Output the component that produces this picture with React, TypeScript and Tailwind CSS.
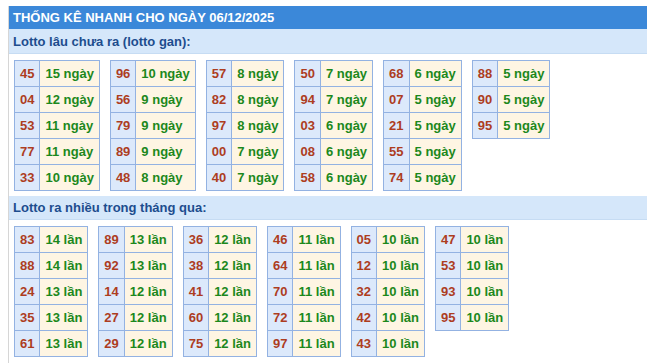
import React from "react";

const gan: [string, string][][] = [
  [["45", "15 ngày"], ["04", "12 ngày"], ["53", "11 ngày"], ["77", "11 ngày"], ["33", "10 ngày"]],
  [["96", "10 ngày"], ["56", "9 ngày"], ["79", "9 ngày"], ["89", "9 ngày"], ["48", "8 ngày"]],
  [["57", "8 ngày"], ["82", "8 ngày"], ["97", "8 ngày"], ["00", "7 ngày"], ["40", "7 ngày"]],
  [["50", "7 ngày"], ["94", "7 ngày"], ["03", "6 ngày"], ["08", "6 ngày"], ["58", "6 ngày"]],
  [["68", "6 ngày"], ["07", "5 ngày"], ["21", "5 ngày"], ["55", "5 ngày"], ["74", "5 ngày"]],
  [["88", "5 ngày"], ["90", "5 ngày"], ["95", "5 ngày"]],
];

const nhieu: [string, string][][] = [
  [["83", "14 lần"], ["88", "14 lần"], ["24", "13 lần"], ["35", "13 lần"], ["61", "13 lần"]],
  [["89", "13 lần"], ["92", "13 lần"], ["14", "12 lần"], ["27", "12 lần"], ["29", "12 lần"]],
  [["36", "12 lần"], ["38", "12 lần"], ["41", "12 lần"], ["60", "12 lần"], ["75", "12 lần"]],
  [["46", "11 lần"], ["64", "11 lần"], ["70", "11 lần"], ["72", "11 lần"], ["97", "11 lần"]],
  [["05", "10 lần"], ["12", "10 lần"], ["32", "10 lần"], ["42", "10 lần"], ["43", "10 lần"]],
  [["47", "10 lần"], ["53", "10 lần"], ["93", "10 lần"], ["95", "10 lần"]],
];

function Tables({ data }: { data: [string, string][][] }) {
  return (
    <div className="flex items-start gap-[10px] pl-[5px] pt-[6px]">
      {data.map((col, i) => (
        <table key={i} className="border-collapse">
          <tbody>
            {col.map(([n, t], j) => (
              <tr key={j}>
                <td className="border border-[#93b2e2] bg-[#dce9fb] h-[26px] px-[5px] py-0 text-center text-[13px] font-bold leading-[15px] text-[#ad3d1f]">
                  {n}
                </td>
                <td className="border border-[#93b2e2] bg-[#fef5e3] h-[26px] px-[5px] py-0 text-left text-[13px] font-bold leading-[15px] text-[#1c881c] whitespace-nowrap">
                  {t}
                </td>
              </tr>
            ))}
          </tbody>
        </table>
      ))}
    </div>
  );
}

export default function App() {
  return (
    <div
      className="w-[647px] h-[363px] overflow-hidden bg-white pt-[6px] pl-[8px]"
      style={{ fontFamily: '"Liberation Sans", Arial, sans-serif' }}
    >
      <div className="border-l border-[#d6d6d6] h-[400px]">
        <div className="h-[23px] bg-[#3b88d9] pl-[4px] flex items-center text-[13px] font-bold text-white leading-none">
          THỐNG KÊ NHANH CHO NGÀY 06/12/2025
        </div>
        <div className="h-[25px] bg-[#d5e7fa] border-b border-[#c6dcf3] pl-[4px] flex items-center text-[13px] font-bold text-[#1d4d8e] leading-none">
          Lotto lâu chưa ra (lotto gan):
        </div>
        <Tables data={gan} />
        <div className="mt-[5px] h-[24px] bg-[#d5e7fa] border-b border-[#c6dcf3] pl-[4px] flex items-center text-[13px] font-bold text-[#1d4d8e] leading-none">
          Lotto ra nhiều trong tháng qua:
        </div>
        <Tables data={nhieu} />
      </div>
    </div>
  );
}
